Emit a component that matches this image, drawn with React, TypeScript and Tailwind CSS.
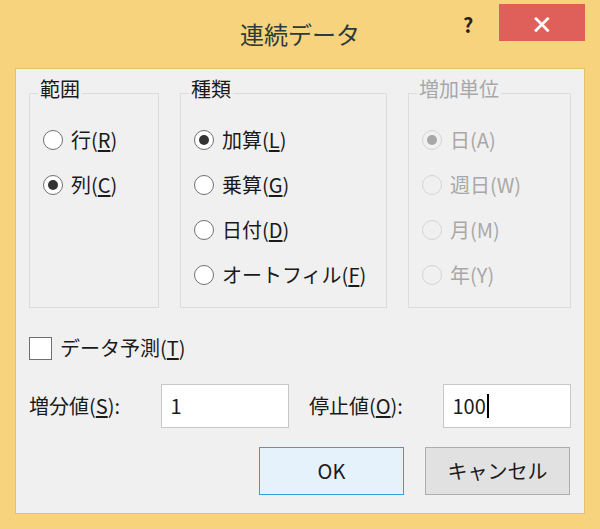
const font = { fontFamily: '"Noto Sans CJK JP", "Noto Sans", sans-serif' };

function Radio({ label, u, rest, checked, disabled }: { label: string; u: string; rest?: string; checked?: boolean; disabled?: boolean }) {
  return (
    <div className={`flex h-[45px] items-center gap-[8px] ${disabled ? 'text-[#a8a8a8]' : 'text-[#1a1a1a]'}`}>
      <span className={`flex h-[20px] w-[20px] items-center justify-center rounded-full border ${disabled ? 'border-[#d4d4d4] bg-[#f0f0f0]' : 'border-[#707070] bg-white'}`}>
        {checked && <span className={`h-[10px] w-[10px] rounded-full ${disabled ? 'bg-[#a8a8a8]' : 'bg-[#333]'}`} />}
      </span>
      <span className="text-[20px] leading-none">
        {label}(
        {disabled ? u : <span className="underline underline-offset-2">{u}</span>}){rest}
      </span>
    </div>
  );
}

function Group({ title, className, disabled, children }: { title: string; className: string; disabled?: boolean; children: React.ReactNode }) {
  return (
    <div className={`relative h-[215px] border border-[#dcdcdc] ${className}`}>
      <span className={`absolute -top-[15px] left-[8px] bg-[#f0f0f0] px-[2px] text-[20px] leading-none ${disabled ? 'text-[#a8a8a8]' : 'text-[#1a1a1a]'}`}>
        {title}
      </span>
      <div className="pl-[13px] pt-[23px]">{children}</div>
    </div>
  );
}

export default function App() {
  return (
    <div style={font} className="h-[529px] w-[600px] bg-[#f6d37c] px-[15px] pb-[15px]">
      <div className="relative flex h-[68px] items-center justify-center">
        <span className="text-[24px] text-[#2c3b3b]">連続データ</span>
        <span className="absolute left-[448px] top-[10px] text-[20px] font-bold text-[#222]">?</span>
        <div className="absolute right-0 top-[4px] flex h-[37px] w-[86px] items-center justify-center bg-[#df5f5b] text-[26px] text-white">✕</div>
      </div>
      <div className="h-[446px] border border-[#e4c26c] bg-[#f0f0f0] px-[13px]">
        <div className="mt-[24px] flex">
          <Group title="範囲" className="w-[130px]">
            <Radio label="行" u="R" />
            <Radio label="列" u="C" checked />
          </Group>
          <Group title="種類" className="ml-[21px] w-[207px]">
            <Radio label="加算" u="L" checked />
            <Radio label="乗算" u="G" />
            <Radio label="日付" u="D" />
            <Radio label="オートフィル" u="F" />
          </Group>
          <Group title="増加単位" className="ml-[21px] w-[163px]" disabled>
            <Radio label="日" u="A" checked disabled />
            <Radio label="週日" u="W" disabled />
            <Radio label="月" u="M" disabled />
            <Radio label="年" u="Y" disabled />
          </Group>
        </div>
        <div className="mt-[25px] flex items-center gap-[8px] text-[20px] text-[#1a1a1a]">
          <span className="h-[23px] w-[23px] border border-[#707070] bg-white" />
          <span>データ予測(<span className="underline underline-offset-2">T</span>)</span>
        </div>
        <div className="mt-[21px] flex items-center text-[20px] text-[#1a1a1a]">
          <span className="w-[133px]">増分値(<span className="underline underline-offset-2">S</span>):</span>
          <div className="flex h-[44px] w-[128px] items-center border border-[#c8c8c8] bg-white px-[8px]">1</div>
          <span className="ml-[20px] w-[135px]">停止値(<span className="underline underline-offset-2">O</span>):</span>
          <div className="flex h-[44px] w-[128px] items-center border border-[#c8c8c8] bg-white px-[8px]">
            100<span className="ml-[1px] h-[24px] w-[2px] bg-black" />
          </div>
        </div>
        <div className="mt-[19px] flex justify-end gap-[21px] pr-[1px] text-[20px] text-[#1a1a1a]">
          <div className="flex h-[48px] w-[145px] items-center justify-center border border-[#3c9ae0] bg-[#e5f1fb]">OK</div>
          <div className="flex h-[48px] w-[145px] items-center justify-center border border-[#adadad] bg-[#e1e1e1]">キャンセル</div>
        </div>
      </div>
    </div>
  );
}
